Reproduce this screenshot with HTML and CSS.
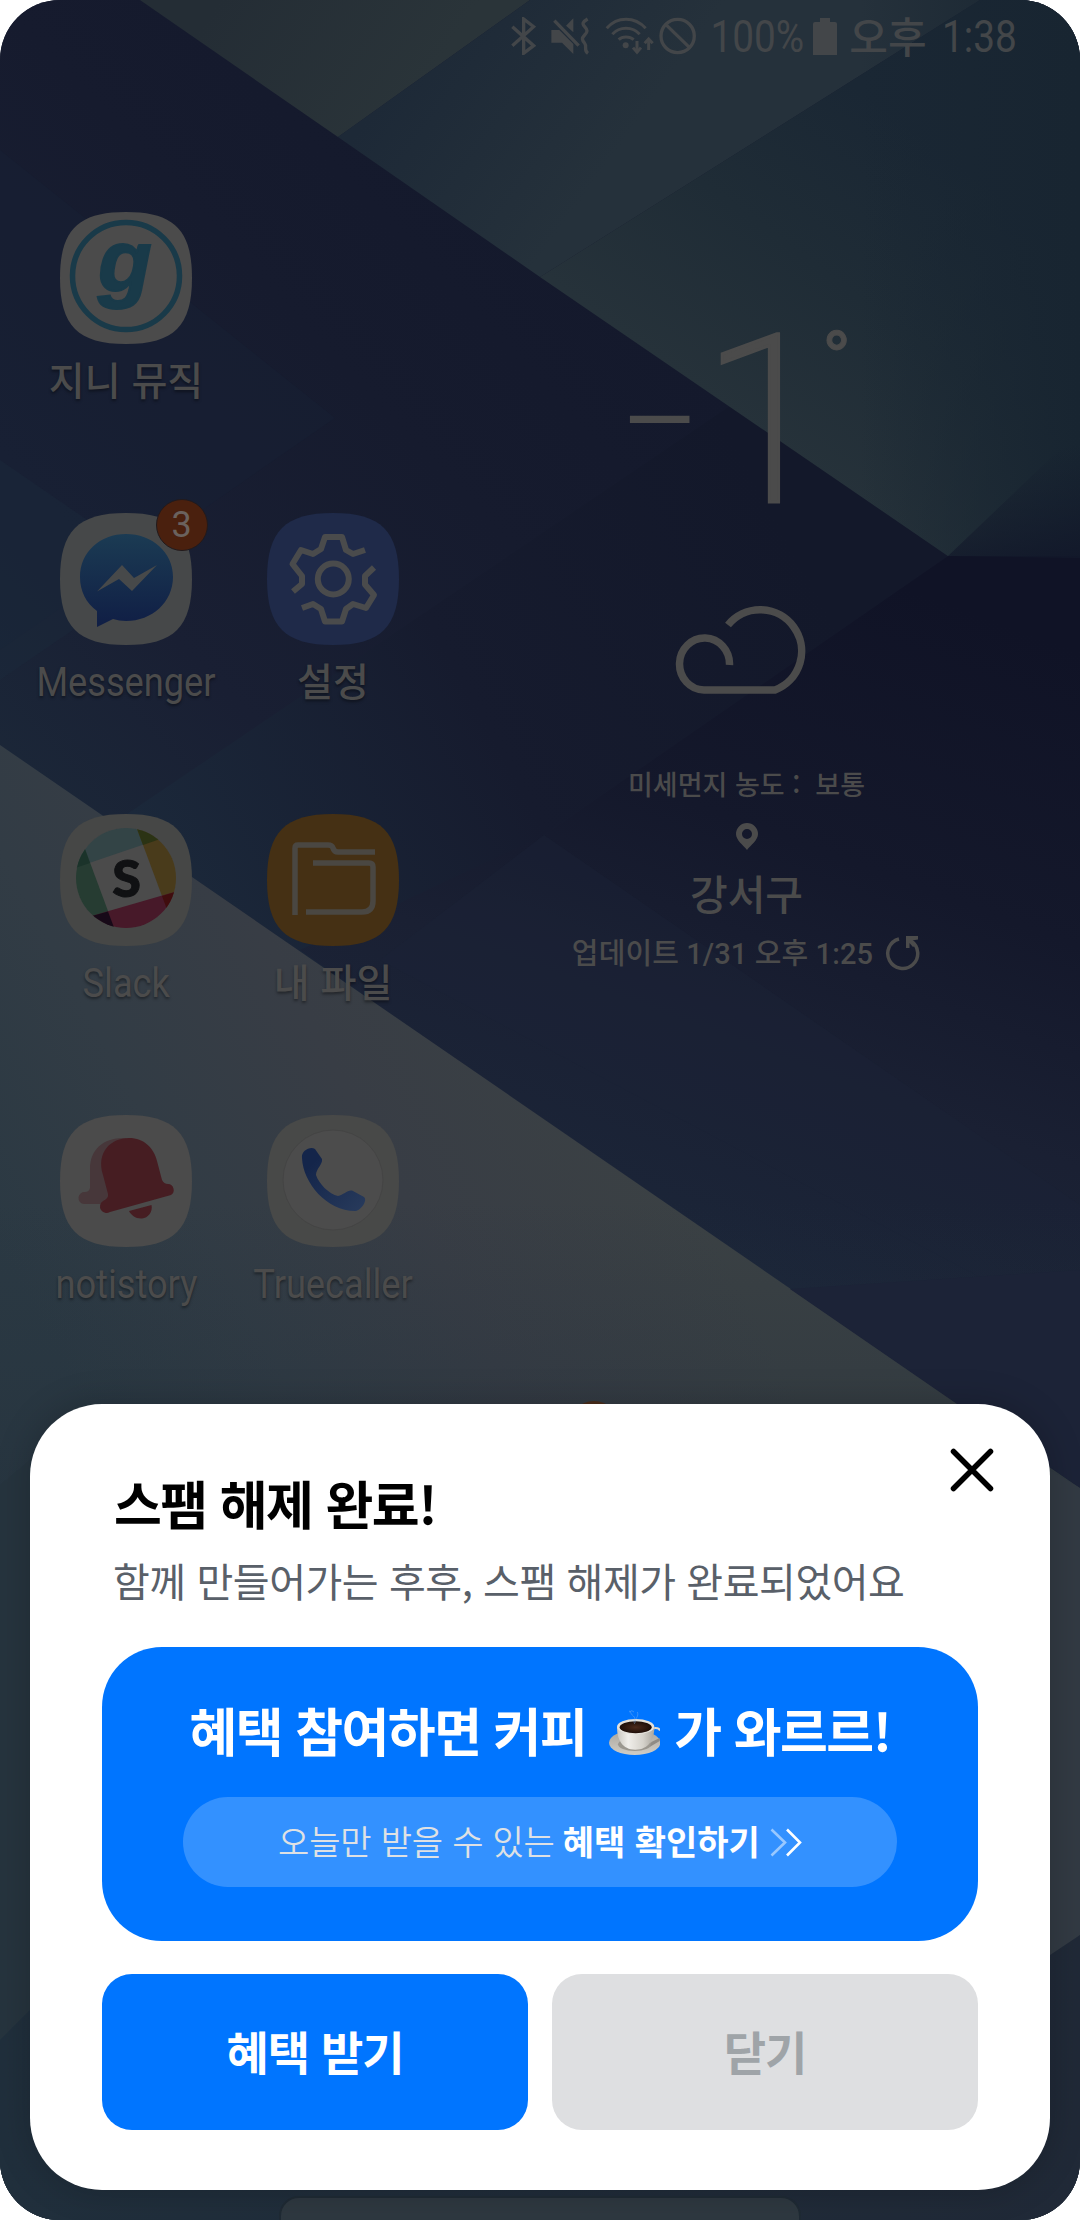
FILE: index.html
```html
<!DOCTYPE html>
<html lang="ko">
<head>
<meta charset="utf-8">
<title>스팸 해제 완료</title>
<link rel="stylesheet" href="styles.css">
</head>
<body>
<div class="phone">
  <svg class="wallpaper" viewBox="0 0 1080 2220" preserveAspectRatio="none" aria-hidden="true">
    <defs>
      <linearGradient id="navy" gradientUnits="userSpaceOnUse" x1="0" y1="900" x2="640" y2="300"><stop offset="0" stop-color="#1c2a3a"/><stop offset=".35" stop-color="#191f33"/><stop offset=".7" stop-color="#161b2e"/><stop offset="1" stop-color="#14192c"/></linearGradient>
      <linearGradient id="deep" gradientUnits="userSpaceOnUse" x1="940" y1="600" x2="700" y2="1250"><stop offset="0" stop-color="#101326"/><stop offset=".4" stop-color="#14182b"/><stop offset=".7" stop-color="#1a2033"/><stop offset="1" stop-color="#1b2538"/></linearGradient>
      <linearGradient id="mid" gradientUnits="userSpaceOnUse" x1="800" y1="560" x2="180" y2="900"><stop offset="0" stop-color="#13182a"/><stop offset=".5" stop-color="#161b2e"/><stop offset="1" stop-color="#1b283a"/></linearGradient>
      <linearGradient id="skyA" gradientUnits="userSpaceOnUse" x1="220" y1="0" x2="400" y2="120"><stop offset="0" stop-color="#242d35"/><stop offset="1" stop-color="#2a3439"/></linearGradient>
      <linearGradient id="skyB" gradientUnits="userSpaceOnUse" x1="380" y1="100" x2="560" y2="230"><stop offset="0" stop-color="#1d2937"/><stop offset="1" stop-color="#25313b"/></linearGradient>
      <linearGradient id="skyC" gradientUnits="userSpaceOnUse" x1="700" y1="390" x2="900" y2="120"><stop offset="0" stop-color="#26323a"/><stop offset=".5" stop-color="#1f2c36"/><stop offset="1" stop-color="#1a2734"/></linearGradient>
      <linearGradient id="skyD" gradientUnits="userSpaceOnUse" x1="860" y1="0" x2="1080" y2="0"><stop offset="0" stop-color="#182531" stop-opacity="0"/><stop offset="1" stop-color="#182531"/></linearGradient>
      <linearGradient id="skyE" gradientUnits="userSpaceOnUse" x1="1000" y1="460" x2="1025" y2="575"><stop offset="0" stop-color="#131a2b" stop-opacity="0"/><stop offset="1" stop-color="#12182a"/></linearGradient>
      <linearGradient id="mist" gradientUnits="userSpaceOnUse" x1="0" y1="1250" x2="560" y2="950"><stop offset="0" stop-color="#2b3943"/><stop offset=".3" stop-color="#323c45"/><stop offset=".6" stop-color="#383d45"/><stop offset="1" stop-color="#3b4144"/></linearGradient>
      <linearGradient id="fade" gradientUnits="userSpaceOnUse" x1="0" y1="1200" x2="0" y2="2150"><stop offset="0" stop-color="#22303c" stop-opacity="0"/><stop offset=".6" stop-color="#22303c" stop-opacity=".8"/><stop offset="1" stop-color="#22303c"/></linearGradient>
      <linearGradient id="floor" gradientUnits="userSpaceOnUse" x1="0" y1="0" x2="1080" y2="0"><stop offset="0" stop-color="#202f3c"/><stop offset="1" stop-color="#202937"/></linearGradient>
    </defs>
    <rect width="1080" height="2220" fill="url(#navy)"/>
    <path d="M0 150L335 418 0 650Z" fill="#182236" opacity=".35"/>
    <path d="M730 406L948 556 544 835 380 1006 0 745 0 900Z" fill="url(#mid)"/>
    <path d="M0 460L160 570 0 680Z" fill="#1c2a3c" opacity=".4"/>
    <path d="M544 835L948 556 1080 556V1490L380 1006 300 950Z" fill="url(#deep)"/>
    <path d="M544 835L1080 1205V1330L380 960Z" fill="#1c2236" opacity=".4"/>
    <path d="M140 0H530L338 137Z" fill="url(#skyA)"/>
    <path d="M530 0H980L540 277 338 137Z" fill="url(#skyB)"/>
    <path d="M980 0H1080V556H948L540 277Z" fill="url(#skyC)"/>
    <path d="M860 0H1080V556H948L860 496Z" fill="url(#skyD)"/>
    <path d="M948 556L1080 430V558Z" fill="url(#skyE)"/>
    <path d="M0 745L1080 1488V2220H0Z" fill="url(#mist)"/>
    <rect y="1200" width="1080" height="1020" fill="url(#fade)"/>
    <path d="M957 1404L790 1289 1080 1270V1488Z" fill="#1c2337"/>
    <path d="M0 1485L30 1460V2010L0 2040Z" fill="#26343e"/>
    <path d="M1050 1470L1080 1488V1935L1050 1960Z" fill="#323a43"/>
    <path d="M0 2040L30 2010 60 2180H1020L1050 1955 1080 1935V2220H0Z" fill="url(#floor)"/>
  </svg>

  <header class="status">
    <svg class="bt" viewBox="34 36 76 115"><path d="M38 65L102 122 72 145V42L102 65 38 122" fill="none" stroke="#434649" stroke-width="10"/></svg>
    <svg class="mute" viewBox="152 36 120 115"><path d="M156 75H180L222 117V147L188 113H156ZM222 40V82L200 62Z" fill="#434649"/><path d="M165 47L238 122M265 42C251 50 247 55 256 65S266 80 256 90 248 105 256 115 252 136 266 145" fill="none" stroke="#434649" stroke-width="10"/></svg>
    <svg class="wifi" viewBox="316 36 146 115"><g fill="none" stroke="#434649" stroke-width="9"><path d="M321 70Q345 43 379 43T438 70M338 88Q354 70 379 70T420 88M357 104Q365 96 379 96T402 104M412 108V142M447 135V102"/><path d="M400 128L412 142 424 128M435 115L447 102 459 115"/></g><circle cx="378" cy="121" r="9" fill="#434649"/></svg>
    <svg class="block" viewBox="478 36 112 115"><g fill="none" stroke="#434649" stroke-width="10"><circle cx="534" cy="93" r="50"/><path d="M498 58L570 128"/></g></svg>
    <span class="pct"><span class="narrow">100%</span></span>
    <svg class="batt" viewBox="0 0 24 37"><path d="M7 0H17V4H22Q24 4 24 6V37H0V6Q0 4 2 4H7Z" fill="#434649"/></svg>
    <span class="ampm">오후</span>
    <span class="clock"><span class="narrow">1:38</span></span>
  </header>

  <main class="home">
    <section class="apps">
      <div class="app">
        <svg viewBox="0 0 132 132"><path d="M66 0C114 0 132 18 132 66S114 132 66 132 0 114 0 66 18 0 66 0Z" fill="#4b4b4b"/><circle cx="66" cy="64" r="53.500" fill="none" stroke="#193a49" stroke-width="5.500"/><text x="38" y="79" class="genie">g</text></svg>
        <span class="name">지니 뮤직</span>
      </div>
      <div class="app none"></div>
      <div class="app">
        <svg viewBox="0 0 132 132"><defs><linearGradient id="bub" x1="0" y1="0" x2="0" y2="1"><stop offset="0" stop-color="#1b3b53"/><stop offset="1" stop-color="#101e45"/></linearGradient></defs><path d="M66 0C114 0 132 18 132 66S114 132 66 132 0 114 0 66 18 0 66 0Z" fill="#464849"/><path d="M66 21C92 21 113 39 113 64S92 108 66 108Q59 108 53 106L37 114V98C26 90 20 78 20 64 20 39 40 21 66 21Z" fill="url(#bub)"/><path d="M37 78.500L62 52 74 65 97 52 72 78 59 66Z" fill="#47494a"/></svg>
        <span class="badge">3</span>
        <span class="name latin"><span class="narrow">Messenger</span></span>
      </div>
      <div class="app">
        <svg viewBox="0 0 132 132"><path d="M66 0C114 0 132 18 132 66S114 132 66 132 0 114 0 66 18 0 66 0Z" fill="#1f2a49"/><g fill="none" stroke="#4a4b4c" stroke-width="6" stroke-linejoin="round"><path d="M98 37L86 41 79 37 75 24H58L54 36 46 41 34 37 25.500 51 35 63V71L26 78.500M107 54.500L98 63V71.500L107 82 99 95 86 91 79 96 75 108.500H58L54 96 46 91 35 95"/><circle cx="66.300" cy="66" r="15.500"/></g></svg>
        <span class="name">설정</span>
      </div>
      <div class="app">
        <svg viewBox="0 0 132 132"><defs><clipPath id="disc"><circle cx="66" cy="64" r="50"/></clipPath></defs><path d="M66 0C114 0 132 18 132 66S114 132 66 132 0 114 0 66 18 0 66 0Z" fill="#464746"/><g clip-path="url(#disc)"><path d="M0 0H132V132H0Z" fill="#4b4b4b"/><path d="M0 0H132V14L0 59Z" fill="#334446"/><path d="M0 0H12L61 132H0Z" fill="#263c32"/><path d="M71.500 0H132V132H120.600Z" fill="#493b1b"/><path d="M0 111L132 73V132H0Z" fill="#471929"/><path d="M0 0H12L30 49 0 59Z" fill="#1b332a"/><path d="M71.500 0L83 31 132 14V0Z" fill="#2b3314"/><path d="M0 111L48 97.500 61 132H0Z" fill="#170a18"/><path d="M102 82L132 73V132H120.600Z" fill="#400d0e"/></g><text x="66.500" y="82.500" class="slack-s">S</text></svg>
        <span class="name latin"><span class="narrow">Slack</span></span>
      </div>
      <div class="app">
        <svg viewBox="0 0 132 132"><path d="M66 0C114 0 132 18 132 66S114 132 66 132 0 114 0 66 18 0 66 0Z" fill="#453014"/><path d="M28 101V34Q28 31 31 31H61Q65 31 66 34 67 38 71 38H108M46 49H102Q106 49 106 53V87Q106 98 95 98H39" fill="none" stroke="#4a4742" stroke-width="5.500"/></svg>
        <span class="name">내 파일</span>
      </div>
      <div class="app">
        <svg viewBox="0 0 132 132"><path d="M66 0C114 0 132 18 132 66S114 132 66 132 0 114 0 66 18 0 66 0Z" fill="#4b4b4b"/><path d="M66 23C44 22 30 34 30 54V73Q29 77 25 77A6 6 0 0 0 24 89H55Z" fill="#47373a"/><path d="M43 60C36 37 51 23 69 23 84 23 94 33 97 46L102 65Q104 69 108 69A6 6 0 0 1 111 80L50 97A6 6 0 0 1 43 86Q49 83 48 79ZM69 96L91.500 90C93 97 88 103 82 103.500 76 104 71 100 69 96Z" fill="#461d22"/></svg>
        <span class="name latin"><span class="narrow">notistory</span></span>
      </div>
      <div class="app">
        <svg viewBox="0 0 132 132"><defs><linearGradient id="tel" x1="0" y1="0" x2="1" y2="1"><stop offset=".2" stop-color="#14254a"/><stop offset="1" stop-color="#283b5c"/></linearGradient></defs><path d="M66 0C114 0 132 18 132 66S114 132 66 132 0 114 0 66 18 0 66 0Z" fill="#484948"/><circle cx="66" cy="65" r="50" fill="#4c4c4c" stroke="#444" stroke-width="1"/><path d="M35 43C34 36 43 31 48 34L55 44C56 49 49 54 49 60 52 69 62 79 71 81 77 80 81 74 86 76L97 82C101 85 94 96 88 96 60 96 36 68 35 43Z" fill="url(#tel)"/></svg>
        <span class="name latin"><span class="narrow">Truecaller</span></span>
      </div>
    </section>

    <section class="weather">
      <svg class="temp" viewBox="0 0 230 180"><text class="t-num" x="69" y="173">1</text><text class="t-deg" x="190" y="58">°</text><text class="t-min" x="-14" y="143">−</text></svg>
      <svg class="cloud" viewBox="675 604 132 90"><path d="M729.500 665A25 26 0 1 0 704 690H775A41.500 41.500 0 1 0 728 625" fill="none" stroke="#4b4b4b" stroke-width="7.500"/></svg>
      <p class="dust">미세먼지 농도 :&nbsp; 보통</p>
      <svg class="pin" viewBox="0 0 22 27"><path fill-rule="evenodd" d="M11 0A11 11 0 0 1 22 11C22 17 15 22 11 27 7 22 0 17 0 11A11 11 0 0 1 11 0ZM11 6A5 5 0 1 0 11 16 5 5 0 1 0 11 6Z" fill="#4b4b4b"/></svg>
      <p class="place">강서구</p>
      <div class="updated">
        <span>업데이트 1/31 오후 1:25</span>
        <svg viewBox="0 0 36 36"><path d="M14 3A15 15 0 1 0 26 5" fill="none" stroke="#4b4b4b" stroke-width="3.500"/><path d="M21 0H33V3.500L27 4.500 31 9 28 11 24.500 7V12H21Z" fill="#4b4b4b"/></svg>
      </div>
    </section>
  </main>

  <span class="dock-badge"></span>
  <div class="dock-panel"></div>

  <section class="sheet">
    <button class="close" aria-label="닫기"><svg viewBox="0 0 44 44"><path d="M3.500 3.500L40.500 40.500M40.500 3.500L3.500 40.500" stroke="#000" stroke-width="5.500" stroke-linecap="round"/></svg></button>
    <h1 class="title">스팸 해제 완료!</h1>
    <p class="sub">함께 만들어가는 후후, 스팸 해제가 완료되었어요</p>
    <div class="promo">
      <h2 class="promo-title">
        <span>혜택 참여하면 커피</span>
        <svg class="cup" viewBox="27 18 153 143">
          <defs>
            <linearGradient id="china" x1="0" y1="0" x2="1" y2="0"><stop offset="0" stop-color="#c9c6bf"/><stop offset=".3" stop-color="#f0eeea"/><stop offset=".7" stop-color="#d5d2cb"/><stop offset="1" stop-color="#aaa69e"/></linearGradient>
            <linearGradient id="plate" x1="0" y1="0" x2="0" y2="1"><stop offset="0" stop-color="#a9a59d"/><stop offset="1" stop-color="#d0cdc6"/></linearGradient>
            <radialGradient id="brew"><stop offset="0" stop-color="#4b2a1c"/><stop offset="1" stop-color="#1e0f09"/></radialGradient>
          </defs>
          <ellipse cx="104" cy="122" rx="77" ry="37" fill="url(#plate)"/>
          <ellipse cx="104" cy="127" rx="50" ry="20" fill="#9b978f"/>
          <path d="M154 84Q160 76 172 79 180 81 178 86" fill="none" stroke="#dedbd4" stroke-width="6"/>
          <path d="M154 120L179 108V117L150 134Z" fill="#8f8b84"/>
          <path d="M51 75C51 112 66 143 106 143S163 112 163 75Z" fill="url(#china)"/>
          <ellipse cx="107" cy="74" rx="56" ry="23" fill="#e4e1db"/>
          <ellipse cx="107" cy="76" rx="48" ry="18" fill="url(#brew)"/>
          <path d="M104 66C98 54 110 50 100 42S94 30 88 27M106 62C104 48 118 44 112 30M88 30Q96 22 102 30" fill="none" stroke="#8ab8ee" stroke-width="2.500" opacity=".5"/>
        </svg>
        <span>가 와르르!</span>
      </h2>
      <div class="pill">
        <span class="pill-light">오늘만 받을 수 있는</span>
        <span class="pill-bold">혜택 확인하기</span>
        <svg class="chev" viewBox="0 0 32 29"><g fill="none" stroke="#fff" stroke-width="2.600"><path d="M1.500 1.500L15 14.500 1.500 27.500" opacity=".5"/><path d="M17 1.500L30 14.500 17 27.500"/></g></svg>
      </div>
    </div>
    <div class="actions">
      <button class="btn primary">혜택 받기</button>
      <button class="btn muted">닫기</button>
    </div>
  </section>
</div>
</body>
</html>
```
FILE: styles.css
```css
* { box-sizing: border-box; }
body { margin: 0; background: #fff; font-family: "Noto Sans CJK KR", "Noto Sans", sans-serif; }
p, h1, h2 { margin: 0; }
svg { display: block; flex: none; }
button { border: 0; padding: 0; background: none; font: inherit; }

.phone { position: relative; width: 1080px; height: 2220px; border-radius: 60px; overflow: hidden; background: #161b2f; }
.wallpaper { position: absolute; inset: 0; width: 100%; height: 100%; }

.narrow { display: inline-block; font-family: Roboto, sans-serif; white-space: nowrap; transform: scaleX(.905); transform-origin: 50% 50%; }

.status { position: relative; display: flex; height: 72px; padding: 17px 0 0 511px; color: #434649; }
.bt { width: 25.300px; height: 38.300px; }
.mute { width: 40px; height: 38.300px; margin-left: 14px; }
.wifi { width: 48.700px; height: 38.300px; margin-left: 14.700px; }
.block { width: 37.300px; height: 38.300px; margin-left: 5.300px; }
.pct, .clock { display: flex; justify-content: center; width: 92px; margin-left: 15px; font-size: 44px; line-height: 40px; }
.status .narrow { transform: scaleX(.88); }
.batt { width: 24px; height: 37px; margin: 1px 0 0 10px; }
.ampm { width: 80px; margin-left: 12px; font-size: 42px; line-height: 36px; font-weight: 500; white-space: nowrap; }
.clock { width: 76px; margin-left: 12px; }

.home { position: relative; display: flex; color: #4b4b4b; }
.apps { display: grid; grid-template-columns: 207px 207px; grid-auto-rows: 301px; padding: 140px 0 0 22.500px; }
.app { position: relative; display: flex; flex-direction: column; align-items: center; }
.app svg { width: 132px; height: 132px; }
.name { margin-top: 10px; font-size: 39px; line-height: 48px; font-weight: 500; white-space: nowrap; text-shadow: 0 2px 3px rgba(0,0,0,.4); }
.latin { font-size: 40px; font-weight: 400; }
.badge { position: absolute; top: -14px; left: 133px; width: 52px; height: 52px; border-radius: 50%; background: #4a200e; border: 1px solid #221a1c; color: #6a625e; font: 36px/50px Roboto, sans-serif; text-align: center; }
.genie { font: italic bold 88px "Liberation Sans", sans-serif; fill: #193a49; stroke: #193a49; stroke-width: 2px; }
.slack-s { font: 900 52px Lato, sans-serif; fill: #101113; stroke: #101113; stroke-width: 1px; text-anchor: middle; }

.weather { display: flex; flex-direction: column; align-items: center; width: 520px; margin-left: 50px; padding-top: 257px; }
.temp { width: 230px; height: 180px; overflow: visible; }
.t-num { font: 200 236px Roboto, sans-serif; fill: #4b4b4b; stroke: #4b4b4b; stroke-width: 3px; }
.t-deg { font: 400 78px Roboto, sans-serif; fill: #4b4b4b; stroke: #4b4b4b; stroke-width: 1px; }
.t-min { font: 300 146px Roboto, sans-serif; fill: #4b4b4b; }
.cloud { width: 132px; height: 90px; margin: 95px 12px 0 0; }
.dust { margin-top: 70px; font-size: 27px; line-height: 40px; font-weight: 500; }
.pin { width: 22px; height: 27px; margin-top: 19px; }
.place { margin-top: 17px; font-size: 41px; line-height: 50px; font-weight: 500; }
.updated { display: flex; align-items: center; gap: 12px; margin-top: 17px; font: 500 29px/40px Roboto, "Noto Sans CJK KR", sans-serif; letter-spacing: .1px; white-space: nowrap; }
.updated svg { width: 36px; height: 36px; }

.dock-badge { position: absolute; left: 568px; top: 1401px; width: 52px; height: 52px; border-radius: 50%; background: #4a2d1b; }
.dock-panel { position: absolute; left: 279px; top: 2196px; width: 522px; height: 60px; border-radius: 20px; border: 2px solid #1f2a34; background: #2e3840; }

.sheet { position: absolute; left: 30px; top: 1404px; width: 1020px; height: 786px; padding: 67px 72px 60px; border-radius: 72px; background: #fff; box-shadow: 0 0 36px rgba(0,0,0,.2); }
.close { position: absolute; right: 56px; top: 44px; width: 44px; height: 44px; }
.title { padding-left: 12px; font-size: 52px; line-height: 64px; font-weight: 700; letter-spacing: -1.500px; color: #000; white-space: nowrap; }
.sub { margin-top: 15px; padding-left: 11px; font-size: 40px; line-height: 60px; letter-spacing: -.45px; color: #596069; white-space: nowrap; }
.promo { display: flex; flex-direction: column; align-items: center; height: 294px; margin-top: 37px; padding-top: 49px; border-radius: 60px; background: #0075ff; color: #fff; }
.promo-title { display: flex; align-items: center; height: 72px; font-size: 52px; line-height: 72px; font-weight: 700; letter-spacing: -1.500px; white-space: nowrap; }
.promo-title span { margin-top: -4px; }
.cup { width: 51px; height: 47.700px; margin: 0 14px 0 23px; }
.pill { display: flex; align-items: center; justify-content: center; width: 714px; height: 90px; margin-top: 29px; border-radius: 45px; background: #3391ff; font-size: 34px; line-height: 50px; white-space: nowrap; }
.pill span { margin-top: -3px; }
.pill-light { font-weight: 350; letter-spacing: -.2px; color: #dfe1e4; }
.pill-bold { margin-left: 8px; font-weight: 700; }
.chev { width: 32px; height: 29px; margin-left: 10px; }
.actions { display: grid; grid-template-columns: 1fr 1fr; gap: 24px; margin-top: 33px; }
.btn { height: 156px; padding-bottom: 4px; border-radius: 30px; font-size: 46px; font-weight: 700; line-height: 152px; letter-spacing: -1px; }
.primary { background: #0075ff; color: #fff; }
.muted { background: #dedfe1; color: #9fa4a8; }
```
